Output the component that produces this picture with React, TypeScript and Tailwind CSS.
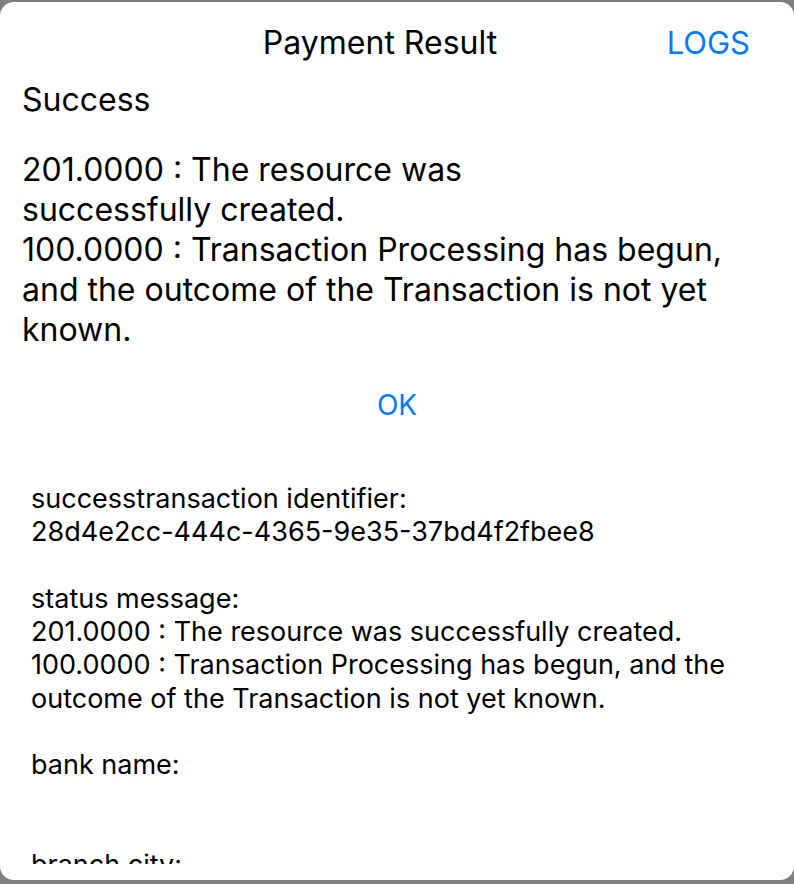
const details = [
  { label: 'successtransaction identifier:', value: ['28d4e2cc-444c-4365-9e35-37bd4f2fbee8'] },
  {
    label: 'status message:',
    value: [
      '201.0000 : The resource was successfully created.',
      '100.0000 : Transaction Processing has begun, and the outcome of the Transaction is not yet known.',
    ],
  },
  { label: 'bank name:', value: [''] },
  { label: 'branch city:', value: [''] },
];

export default function App() {
  return (
    <div className="h-[884px] bg-[#7f7f7f] pt-[2px] pb-[4px] font-['Inter',sans-serif] text-black">
      <div className="flex h-full flex-col rounded-[14px] bg-white pb-[16px]">
        <header className="relative flex h-[78px] items-center justify-center pt-[4px] pr-[34px]">
          <h1 className="text-[32px] leading-[38px]">Payment Result</h1>
          <button className="absolute right-[44px] top-[4px] flex h-[74px] items-center text-[31px] leading-[38px] text-[#007aff]">
            LOGS
          </button>
        </header>

        <div className="px-[22px]">
          <p className="text-[32px] leading-[40px]">Success</p>
          <p className="mt-[30px] text-[32px] leading-[40px]">
            201.0000 : The resource was
            <br />
            successfully created.
            <br />
            100.0000 : Transaction Processing has begun, and the outcome of the Transaction is not yet known.
          </p>
        </div>

        <div className="mt-[38px] flex justify-center">
          <button className="text-[28px] leading-[34px] text-[#007aff]">OK</button>
        </div>

        <div className="mt-[60px] min-h-0 flex-1 overflow-hidden px-[31px] text-[27px] leading-[33.3px]">
          {details.map(d => (
            <div key={d.label} className="mb-[33.3px]">
              <p>{d.label}</p>
              {d.value.map((v, i) => (
                <p key={i} className="min-h-[33.3px]">{v}</p>
              ))}
            </div>
          ))}
        </div>
      </div>
    </div>
  );
}
